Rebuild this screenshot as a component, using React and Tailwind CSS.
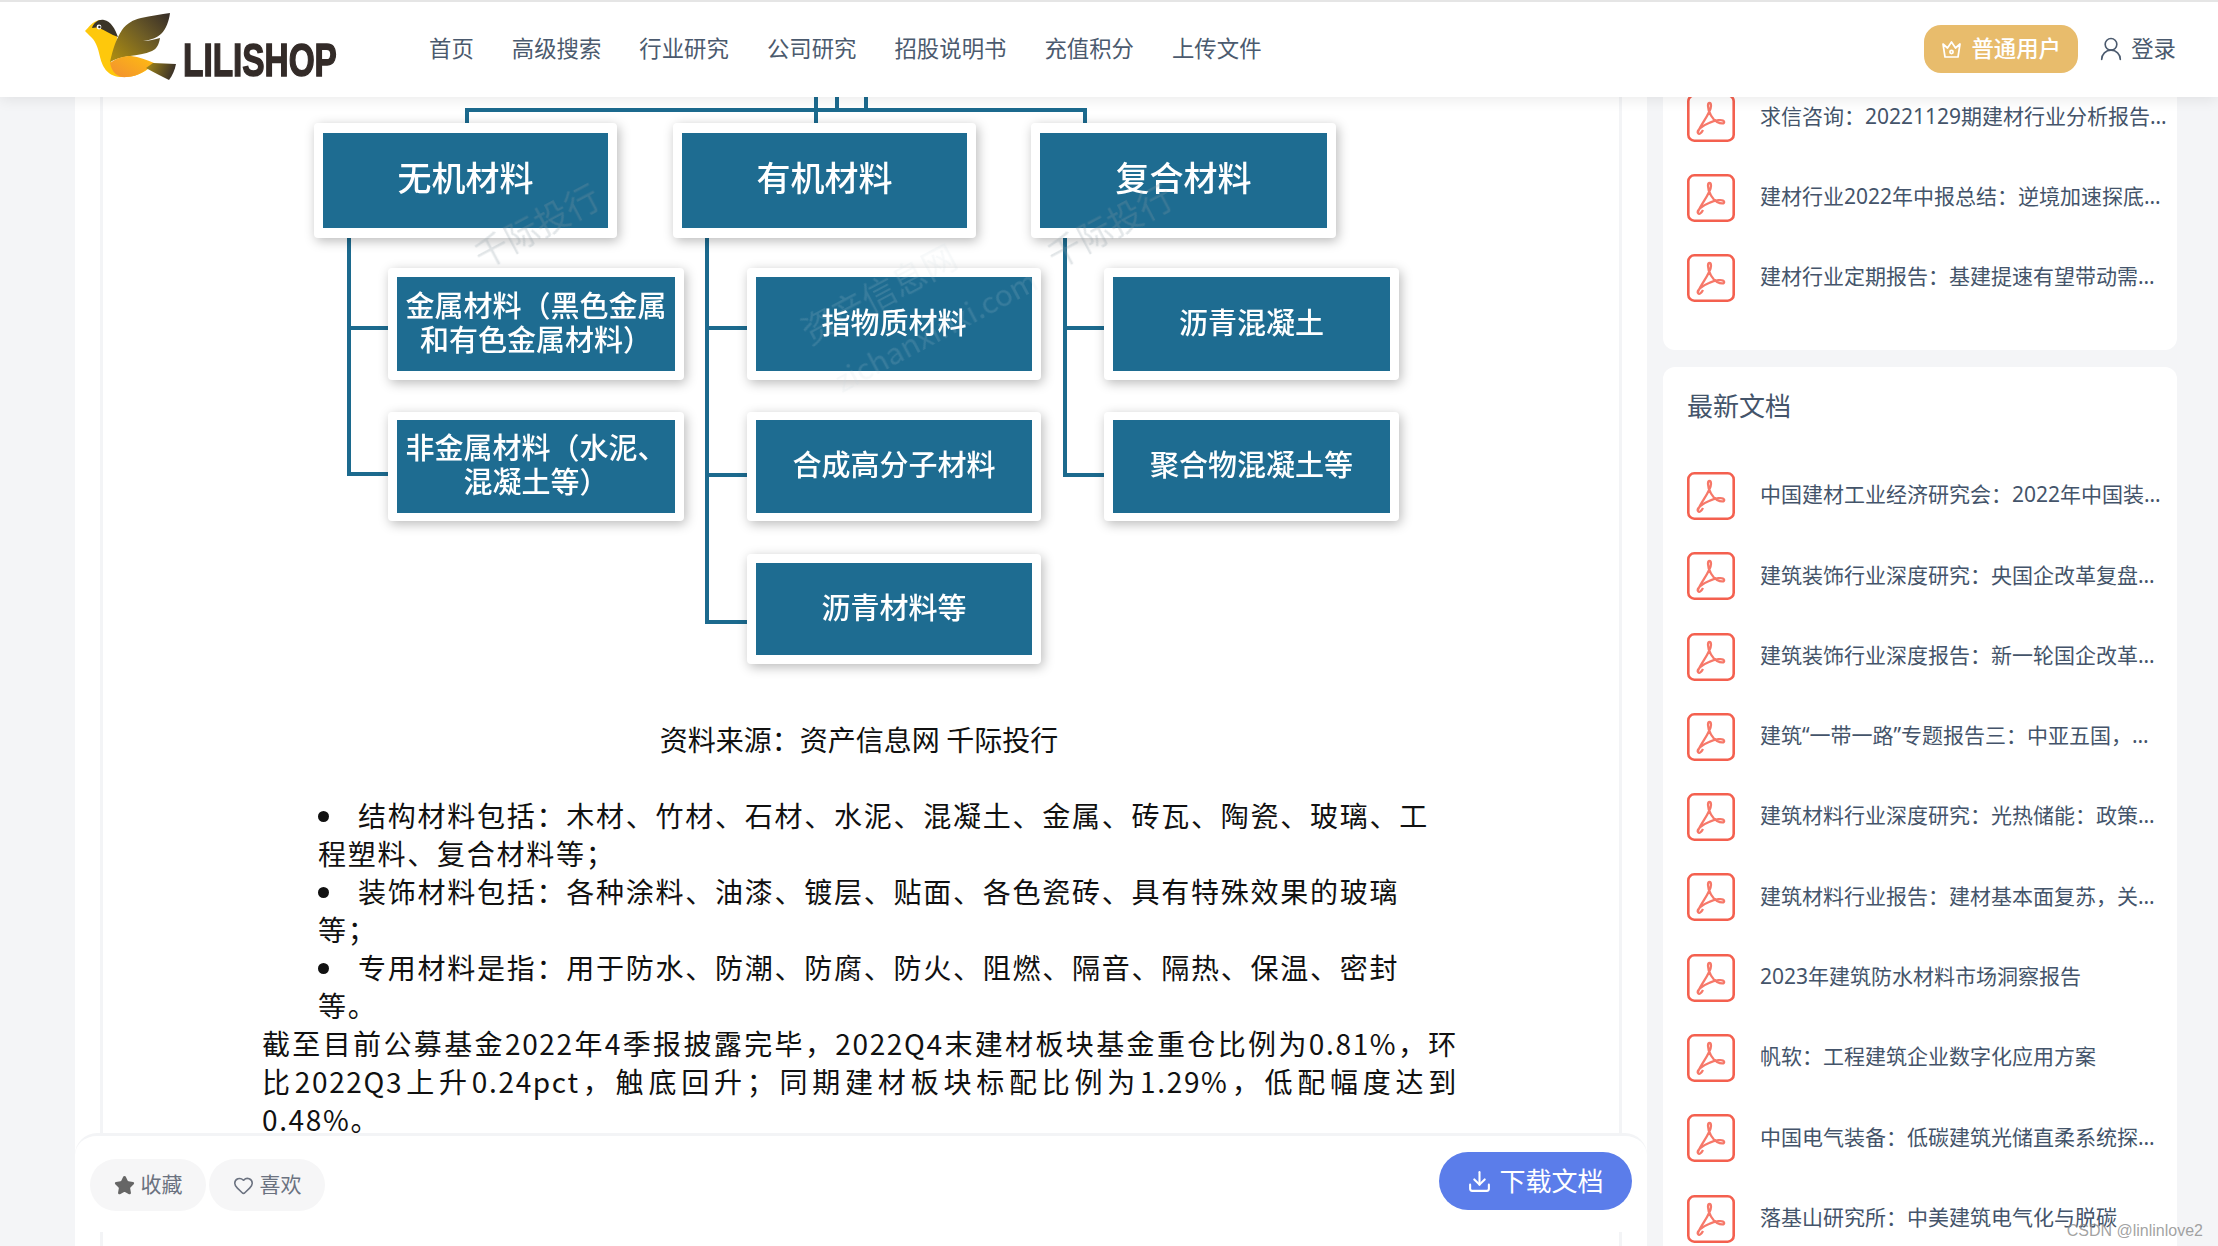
import React from "react";
import { Star, Heart, Download, UserRound } from "lucide-react";

const navItems = ["首页", "高级搜索", "行业研究", "公司研究", "招股说明书", "充值积分", "上传文件"];

const topDocs = [
  "求信咨询：20221129期建材行业分析报告及投资建议研究",
  "建材行业2022年中报总结：逆境加速探底，龙头优势显现",
  "建材行业定期报告：基建提速有望带动需求回升并改善",
];

const newDocs = [
  "中国建材工业经济研究会：2022年中国装配式建筑发展报告",
  "建筑装饰行业深度研究：央国企改革复盘与展望分析报告",
  "建筑装饰行业深度报告：新一轮国企改革启航价值重估",
  "建筑“一带一路”专题报告三：中亚五国，丝路新机遇分析",
  "建筑材料行业深度研究：光热储能：政策驱动打开空间",
  "建筑材料行业报告：建材基本面复苏，关注消费建材龙头",
  "2023年建筑防水材料市场洞察报告",
  "帆软：工程建筑企业数字化应用方案",
  "中国电气装备：低碳建筑光储直柔系统探索与实践分享",
  "落基山研究所：中美建筑电气化与脱碳",
];

const nodes = [
  { c: "left-[211px] top-[26px] w-[303px] h-[115px] py-[10px] text-[34px]", t: "无机材料" },
  { c: "left-[570px] top-[26px] w-[303px] h-[115px] py-[10px] text-[34px]", t: "有机材料" },
  { c: "left-[928px] top-[26px] w-[305px] h-[115px] py-[10px] text-[34px]", t: "复合材料" },
  { c: "left-[285px] top-[171px] w-[296px] h-[112px] py-[9px] text-[29px]", t: "金属材料（黑色金属\n和有色金属材料）" },
  { c: "left-[285px] top-[315px] w-[296px] h-[109px] py-[8px] text-[29px]", t: "非金属材料（水泥、\n混凝土等）" },
  { c: "left-[644px] top-[171px] w-[294px] h-[112px] py-[9px] text-[29px]", t: "指物质材料" },
  { c: "left-[644px] top-[315px] w-[294px] h-[109px] py-[8px] text-[29px]", t: "合成高分子材料" },
  { c: "left-[644px] top-[457px] w-[294px] h-[110px] py-[9px] text-[29px]", t: "沥青材料等" },
  { c: "left-[1001px] top-[171px] w-[295px] h-[112px] py-[9px] text-[29px]", t: "沥青混凝土" },
  { c: "left-[1001px] top-[315px] w-[295px] h-[109px] py-[8px] text-[29px]", t: "聚合物混凝土等" },
];

const lines = [
  "left-[362px] top-[11px] w-[622px] h-[4px] rounded-t-[3px]",
  "left-[711px] top-0 w-[4px] h-[26px]",
  "left-[732px] top-0 w-[4px] h-[13px]",
  "left-[761px] top-0 w-[4px] h-[13px]",
  "left-[362px] top-[11px] w-[4px] h-[15px]",
  "left-[980px] top-[11px] w-[4px] h-[15px]",
  "left-[244px] top-[141px] w-[4px] h-[238px]",
  "left-[244px] top-[229px] w-[42px] h-[4px]",
  "left-[244px] top-[375px] w-[42px] h-[4px]",
  "left-[602px] top-[141px] w-[4px] h-[384px]",
  "left-[602px] top-[229px] w-[43px] h-[4px]",
  "left-[602px] top-[376px] w-[43px] h-[4px]",
  "left-[602px] top-[523px] w-[43px] h-[4px]",
  "left-[960px] top-[141px] w-[4px] h-[237px]",
  "left-[960px] top-[229px] w-[42px] h-[4px]",
  "left-[960px] top-[376px] w-[42px] h-[4px]",
];

function Bird() {
  return (
    <svg width="91" height="67" viewBox="0 0 91 67" className="shrink-0">
      <defs>
        <linearGradient id="wing" x1="0.05" y1="0.9" x2="1" y2="0.1">
          <stop offset="0" stopColor="#a98a12" />
          <stop offset="0.55" stopColor="#6d5c26" />
          <stop offset="1" stopColor="#3a3028" />
        </linearGradient>
        <linearGradient id="tail" x1="0" y1="0" x2="1" y2="0.2">
          <stop offset="0" stopColor="#a58a17" />
          <stop offset="1" stopColor="#3a3028" />
        </linearGradient>
        <linearGradient id="belly" x1="0" y1="1" x2="1" y2="0.2">
          <stop offset="0" stopColor="#f28f32" />
          <stop offset="1" stopColor="#fdb913" />
        </linearGradient>
      </defs>
      <path d="M0 18 C4 14 7 9 14 7 C22 6 29 14 32 24 C32 33 27 42 26 50 L70 50 C62 58 52 64 40 64 C24 65 18 56 15 44 C13 34 10 27 5 23 Z" fill="#fec80c" />
      <path d="M7 15 C9 9 14 6 19 7 C26 8 30 16 33 24 C26 22 20 17 14 15 C11 14 9 15 7 15 Z" fill="#3b3528" />
      <circle cx="14" cy="14" r="2.4" fill="#fff" />
      <circle cx="14.4" cy="14" r="1.2" fill="#2a2a2a" />
      <path d="M25 49 C28 36 31 26 37 17 C42 10 48 7 56 5 C66 3 76 1 85 0 C84 8 81 16 77 20 C72 25 66 27 58 28 C64 28 70 26 75 25 C74 31 72 36 67 38 C60 41 52 42 45 43 C37 44 30 46 25 49 Z" fill="url(#wing)" />
      <path d="M25 50 C32 45 38 43 46 43 C54 44 62 47 69 50 C62 57 54 63 42 64 C33 65 27 60 25 50 Z" fill="url(#belly)" />
      <path d="M61 55 L68 50 L91 51 C90 57 87 63 84 67 C76 63 68 59 61 55 Z" fill="url(#tail)" />
    </svg>
  );
}

function PdfIcon() {
  return (
    <svg width="48" height="48" viewBox="0 0 48 48" fill="none" className="shrink-0">
      <rect x="1.3" y="1.3" width="45.4" height="45.4" rx="6" stroke="#f4604f" strokeWidth="2.6" />
      <path
        d="M11 38 C13 31 24 19 24 12 C24 8 21 8 21 12 C21 18 26 26 30 28 C34 30 38 30 37 27.5 C36 25 28 26 22 29 C17 31 9 36 11 39 C12 41 14.5 39 16 36"
        stroke="#f4604f"
        strokeWidth="2.3"
        strokeOpacity="0.85"
      />
    </svg>
  );
}

function CrownIcon() {
  return (
    <svg width="21" height="21" viewBox="0 0 21 21" fill="none" stroke="#fff" strokeWidth="1.7" strokeLinejoin="round" className="shrink-0">
      <path d="M2 5 L6.5 9 L10.5 3 L14.5 9 L19 5 L17 18 L4 18 Z" />
      <circle cx="10.5" cy="13" r="1.6" />
    </svg>
  );
}

function DocRow({ title }) {
  return (
    <div className="flex items-center h-[48px]">
      <PdfIcon />
      <div className="ml-[25px] mr-[9px] pb-[2px] flex-1 min-w-0 truncate text-[21px] text-[#44546a] font-['Noto_Sans','Noto_Sans_CJK_SC',sans-serif]">
        {title}
      </div>
    </div>
  );
}

function Diagram() {
  return (
    <div className="relative h-[623px] shrink-0">
      {lines.map((c) => (
        <div key={c} className={"absolute bg-[#1c6a8e] " + c} />
      ))}
      {nodes.map((n) => (
        <div
          key={n.t}
          className={"absolute px-[9px] bg-white rounded-[4px] shadow-[2px_3px_12px_rgba(0,0,0,0.28)] " + n.c}
        >
          <div className="h-full pb-[7px] bg-[#1e6c91] flex items-center justify-center text-center text-white font-medium whitespace-pre-line leading-[34px] blur-[0.6px]">
            {n.t}
          </div>
        </div>
      ))}
      <div className="absolute left-[365px] top-[102px] -rotate-[28deg] text-[34px] text-[#8a9aa5]/25 whitespace-nowrap blur-[0.5px]">千际投行</div>
      <div className="absolute left-[938px] top-[102px] -rotate-[28deg] text-[34px] text-[#8a9aa5]/25 whitespace-nowrap blur-[0.5px]">千际投行</div>
      <div className="absolute left-[690px] top-[170px] -rotate-[28deg] text-[34px] text-[#c7d5dd]/15 whitespace-nowrap blur-[0.5px]">资产信息网</div>
      <div className="absolute left-[720px] top-[210px] -rotate-[28deg] text-[30px] text-[#c7d5dd]/15 whitespace-nowrap blur-[0.5px]">zichanxinxi.com</div>
    </div>
  );
}

export default function App() {
  return (
    <div className="relative w-[2218px] h-[1246px] overflow-hidden flex flex-col bg-[#f4f5f7] font-['Noto_Sans_CJK_SC','Noto_Sans',sans-serif]">
      <header className="relative z-10 h-[97px] shrink-0 border-t-2 border-[#e5e5e5] bg-white shadow-[0_2px_14px_rgba(0,0,0,0.09)] flex items-center pl-[85px] pr-[42px]">
        <div className="flex items-end w-[344px] -mt-[7px]">
          <Bird />
          <div className="ml-[7px] mb-[3px] w-[154px] h-[34px]">
            <span className="block origin-left scale-x-[0.71] font-['Liberation_Sans'] font-bold text-[47px] leading-[34px] text-[#332b28] [-webkit-text-stroke:1.5px_#332b28] whitespace-nowrap">
              LILISHOP
            </span>
          </div>
        </div>
        <nav className="flex items-center gap-[38px] text-[22.4px] text-[#4b5a6e] -mt-[4px]">
          {navItems.map((n) => (
            <span key={n}>{n}</span>
          ))}
        </nav>
        <div className="ml-auto flex items-center -mt-[1px]">
          <div className="flex items-center justify-center gap-[9px] w-[154px] h-[48px] rounded-[17px] bg-[#e8bc6c] text-white text-[22.4px] font-medium">
            <CrownIcon />
            <span className="-mt-[3px]">普通用户</span>
          </div>
          <div className="ml-[19px] flex items-center gap-[6px] text-[22.4px] text-[#4b5a6e]">
            <UserRound size={28} strokeWidth={1.4} />
            <span className="-mt-[3px]">登录</span>
          </div>
        </div>
      </header>

      <div className="flex-1 min-h-0 flex overflow-hidden pl-[75px]">
        <main className="w-[1572px] shrink-0 bg-white flex flex-col">
          <div className="h-[1036px] shrink-0 mx-[25px] border-x-[3px] border-[#f3f4f6] overflow-hidden flex flex-col">
            <Diagram />
            <p className="pr-[4px] text-center text-[28px] leading-[38px] text-[#111]">资料来源：资产信息网 千际投行</p>
            <ul className="mt-[38px] ml-[215px] w-[1127px] list-disc list-inside text-[28px] leading-[38px] tracking-[1.75px] text-[#111]">
              <li>结构材料包括：木材、竹材、石材、水泥、混凝土、金属、砖瓦、陶瓷、玻璃、工程塑料、复合材料等；</li>
              <li>装饰材料包括：各种涂料、油漆、镀层、贴面、各色瓷砖、具有特殊效果的玻璃等；</li>
              <li>专用材料是指：用于防水、防潮、防腐、防火、阻燃、隔音、隔热、保温、密封等。</li>
            </ul>
            <p className="ml-[159px] mr-[161px] text-justify text-[28px] leading-[38px] tracking-[1.65px] text-[#111]">
              截至目前公募基金2022年4季报披露完毕，2022Q4末建材板块基金重仓比例为0.81%，环比2022Q3上升0.24pct，触底回升；同期建材板块标配比例为1.29%，低配幅度达到0.48%。
            </p>
          </div>
          <div className="h-[99px] shrink-0 rounded-t-[22px] border-t-[3px] border-[#f3f4f6] flex items-center pl-[15px] pr-[15px]">
            <div className="flex items-center gap-[3px] mt-[2px]">
              <button className="w-[116px] h-[52px] rounded-full bg-[#f6f6f7] flex items-center justify-center gap-[6px] text-[21px] text-[#6b7280]">
                <Star size={21} fill="#666" stroke="#666" />
                <span className="-mt-[3px]">收藏</span>
              </button>
              <button className="w-[116px] h-[52px] rounded-full bg-[#f6f6f7] flex items-center justify-center gap-[6px] text-[21px] text-[#6b7280]">
                <Heart size={21} strokeWidth={1.8} />
                <span className="-mt-[3px]">喜欢</span>
              </button>
            </div>
            <button className="ml-auto -mt-[6px] w-[193px] h-[58px] rounded-full bg-[#5b7dea] flex items-center justify-center gap-[7px] text-[26px] text-white">
              <Download size={25} strokeWidth={2} />
              <span className="-mt-[3px]">下载文档</span>
            </button>
          </div>
          <div className="flex-1 mx-[25px] border-x-[3px] border-[#f3f4f6]" />
        </main>

        <aside className="ml-[16px] w-[514px] shrink-0 flex flex-col gap-[17px]">
          <section className="-mt-[3px] bg-white rounded-b-[12px] pl-[24px] pb-[48px] flex flex-col gap-[32px]">
            {topDocs.map((t) => (
              <DocRow key={t} title={t} />
            ))}
          </section>
          <section className="flex-1 bg-white rounded-t-[12px] pl-[24px] pt-[20px]">
            <h2 className="text-[26px] leading-[36px] text-[#44546a] font-normal">最新文档</h2>
            <div className="mt-[49px] flex flex-col gap-[32.3px]">
              {newDocs.map((t) => (
                <DocRow key={t} title={t} />
              ))}
            </div>
          </section>
        </aside>
      </div>

      <div className="absolute right-[15px] bottom-[3px] text-[16px] text-[#8a8a8a]/80 font-['Liberation_Sans']">CSDN @linlinlove2</div>
    </div>
  );
}
